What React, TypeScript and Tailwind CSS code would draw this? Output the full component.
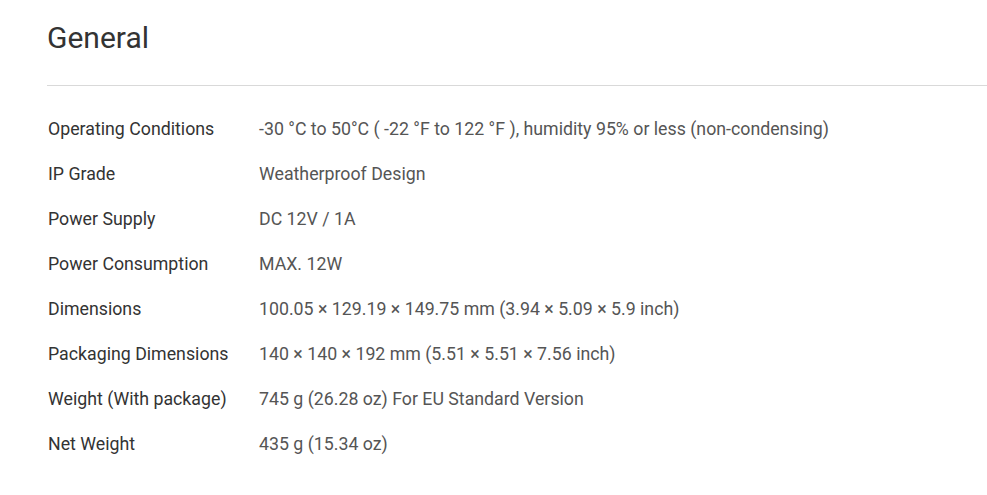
import React from 'react';

const specs: { label: string; value: React.ReactNode }[] = [
  {
    label: 'Operating Conditions',
    value: '-30 °C to 50°C ( -22 °F to 122 °F ), humidity 95% or less (non-condensing)',
  },
  { label: 'IP Grade', value: 'Weatherproof Design' },
  { label: 'Power Supply', value: 'DC 12V / 1A' },
  { label: 'Power Consumption', value: 'MAX. 12W' },
  { label: 'Dimensions', value: '100.05 × 129.19 × 149.75 mm (3.94 × 5.09 × 5.9 inch)' },
  { label: 'Packaging Dimensions', value: '140 × 140 × 192 mm (5.51 × 5.51 × 7.56 inch)' },
  { label: 'Weight (With package)', value: '745 g (26.28 oz) For EU Standard Version' },
  { label: 'Net Weight', value: '435 g (15.34 oz)' },
];

export default function App() {
  return (
    <div
      className="w-[987px] h-[495px] bg-white pl-[47px] overflow-hidden"
      style={{ fontFamily: 'Roboto, "Liberation Sans", sans-serif' }}
    >
      <h2 className="pt-[19px] text-[30px] leading-[38px] font-normal text-[#333333]">General</h2>
      <div className="mt-[28px] border-t border-[#d9d9d9]"></div>
      <div className="mt-[21px]">
        {specs.map((s) => (
          <div key={s.label} className="flex items-center h-[45px] text-[17.75px]">
            <div className="w-[212px] shrink-0 pl-px text-[#333333]">{s.label}</div>
            <div className="text-[#555555]">{s.value}</div>
          </div>
        ))}
      </div>
    </div>
  );
}
